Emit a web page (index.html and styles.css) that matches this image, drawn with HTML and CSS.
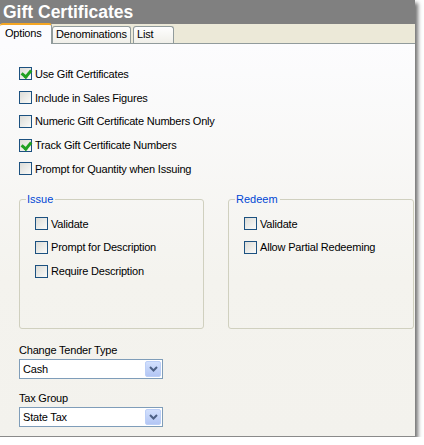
FILE: index.html
```html
<!DOCTYPE html>
<html lang="en">
<head>
  <meta charset="UTF-8">
  <title>Gift Certificates</title>
  <link rel="stylesheet" href="styles.css">
</head>
<body>

<div class="panel">
  <div class="title">Gift Certificates</div>

  <div class="tabs">
    <div class="tab active">Options</div>
    <div class="tab">Denominations</div>
    <div class="tab">List</div>
  </div>

  <div class="page">
    <label class="opt"><span class="box checked"></span>Use Gift Certificates</label>
    <label class="opt"><span class="box"></span>Include in Sales Figures</label>
    <label class="opt"><span class="box"></span>Numeric Gift Certificate Numbers Only</label>
    <label class="opt"><span class="box checked"></span>Track Gift Certificate Numbers</label>
    <label class="opt"><span class="box"></span>Prompt for Quantity when Issuing</label>

    <div class="groups">
      <fieldset class="group">
        <legend>Issue</legend>
        <div class="group-body">
          <label class="opt"><span class="box"></span>Validate</label>
          <label class="opt"><span class="box"></span>Prompt for Description</label>
          <label class="opt"><span class="box"></span>Require Description</label>
        </div>
      </fieldset>
      <fieldset class="group">
        <legend>Redeem</legend>
        <div class="group-body">
          <label class="opt"><span class="box"></span>Validate</label>
          <label class="opt"><span class="box"></span>Allow Partial Redeeming</label>
        </div>
      </fieldset>
    </div>

    <div class="field first">
      <div class="field-label">Change Tender Type</div>
      <div class="combo">
        <span class="combo-text">Cash</span>
        <span class="combo-btn">
          <svg width="9" height="6" viewBox="0 0 9 6"><path d="M1 1 L4.5 4.5 L8 1" fill="none" stroke="#4d6185" stroke-width="2"/></svg>
        </span>
      </div>
    </div>

    <div class="field">
      <div class="field-label">Tax Group</div>
      <div class="combo">
        <span class="combo-text">State Tax</span>
        <span class="combo-btn">
          <svg width="9" height="6" viewBox="0 0 9 6"><path d="M1 1 L4.5 4.5 L8 1" fill="none" stroke="#4d6185" stroke-width="2"/></svg>
        </span>
      </div>
    </div>
  </div>
</div>

</body>
</html>
```

FILE: styles.css
```css
* {
  box-sizing: border-box;
}

body {
  margin: 0;
  background: #fff;
  font-family: 'Liberation Sans', Arial, sans-serif;
  font-size: 11px;
  color: #000;
}

.panel {
  width: 415px;
  height: 437px;
  display: flex;
  flex-direction: column;
  border-bottom: 1px solid #8a8a8a;
  box-shadow: 3px 3px 4px rgba(0, 0, 0, 0.55);
}

.title {
  height: 24px;
  background: #808080;
  color: #fff;
  font-weight: bold;
  font-size: 17.5px;
  line-height: 24px;
  padding-left: 3px;
}

.tabs {
  height: 20px;
  background: #ece9d8;
  border-bottom: 1px solid #919b9c;
  display: flex;
  align-items: flex-end;
}

.tab {
  height: 17px;
  line-height: 15px;
  padding: 0 3px;
  margin-right: 1px;
  border: 1px solid #919b9c;
  border-bottom: none;
  border-radius: 3px 3px 0 0;
  background: linear-gradient(#fefefe, #f0efe9);
  letter-spacing: -0.2px;
  white-space: nowrap;
}

.tab.active {
  height: 21px;
  margin-bottom: -1px;
  width: 52px;
  padding: 0 0 0 5px;
  border-left: none;
  border-top: 2px solid #f5a623;
  background: #fcfcfe;
  line-height: 17px;
  margin-right: 0;
}

.tab:nth-child(2) {
  width: 79px;
}

.tab:nth-child(3) {
  width: 41px;
  margin-left: 1px;
}

.page {
  flex: 1;
  background: linear-gradient(#fcfcfe, #f4f3ee 60%, #f3f2ed);
  padding: 18px 0 0 19px;
}

.opt {
  display: flex;
  align-items: center;
  height: 23.75px;
  letter-spacing: -0.2px;
}

.box {
  width: 13px;
  height: 13px;
  margin-right: 3px;
  border: 1px solid #1c5180;
  background: linear-gradient(135deg, #dcdcd7, #fafaf8);
  position: relative;
  flex: none;
}

.box.checked::after {
  content: "";
  position: absolute;
  left: 3px;
  top: 0;
  width: 4px;
  height: 7px;
  border: solid #21a121;
  border-width: 0 3px 3px 0;
  transform: rotate(40deg);
}

.groups {
  display: flex;
  gap: 24px;
  margin-top: 12px;
}

.group {
  margin: 0;
  padding: 0;
  width: 185px;
  height: 136px;
  border: 1px solid #d0d0bf;
  border-radius: 3px;
}

.group + .group {
  width: 186px;
}

.group legend {
  color: #0046d5;
  margin-left: 6px;
  padding: 0 2px 0 1px;
  line-height: 13px;
}

.group-body {
  padding: 6px 0 0 15px;
}

.field {
  margin-top: 13px;
}

.field.first {
  margin-top: 15px;
}

.field-label {
  line-height: 13px;
  margin-bottom: 2px;
  letter-spacing: -0.2px;
}

.combo {
  width: 144px;
  height: 20px;
  border: 1px solid #7f9db9;
  background: #fff;
  display: flex;
  align-items: center;
  justify-content: space-between;
  padding: 0 1px 0 3px;
}

.combo-text {
  letter-spacing: -0.2px;
}

.combo-btn {
  width: 16px;
  height: 16px;
  border: 1px solid #bccff7;
  border-radius: 2px;
  background: linear-gradient(#d2e0fd, #b3c6f4);
  display: flex;
  align-items: center;
  justify-content: center;
}
```
